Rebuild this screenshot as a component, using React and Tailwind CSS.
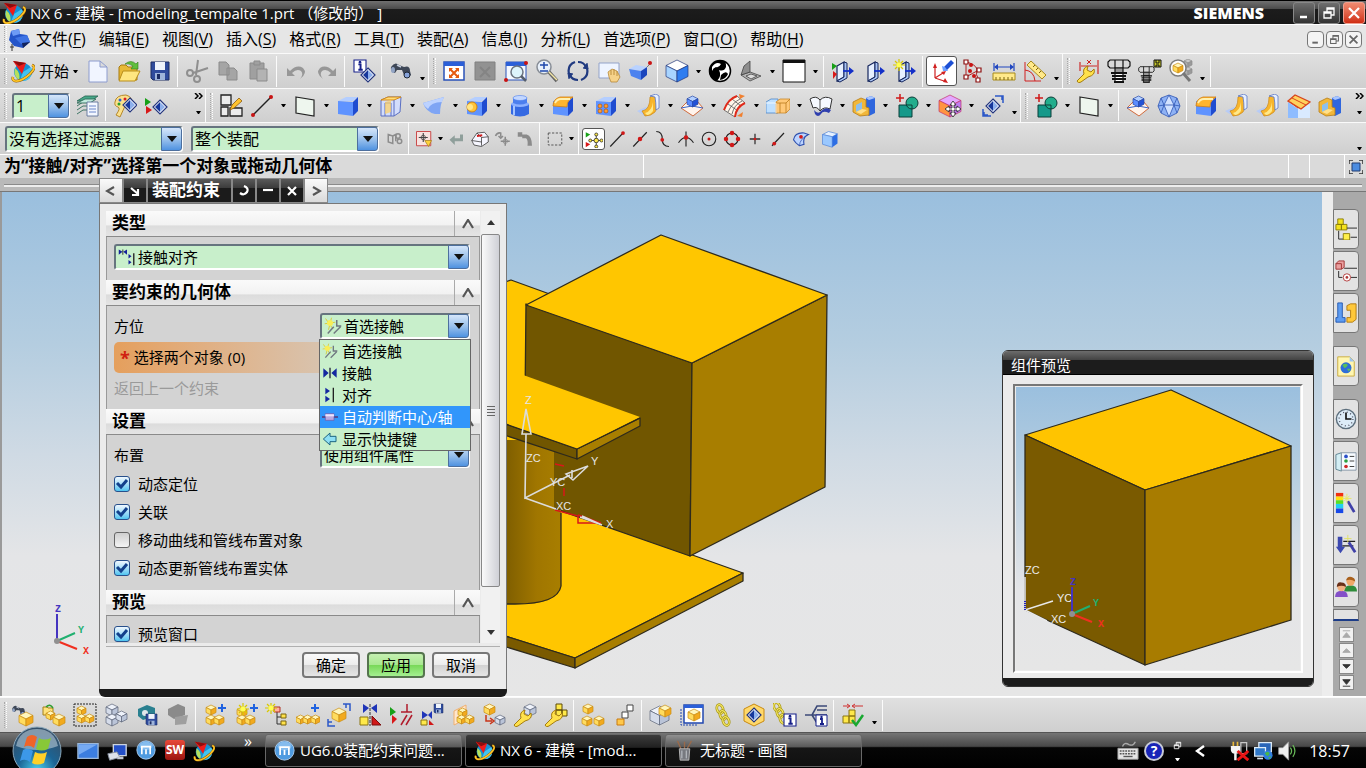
import React, { useState } from 'react'

const uiFont = "font-['Open_Sans','Noto_Sans_CJK_SC',sans-serif]"

const palettes = {
  gold: ['#fff6bc', '#ffdc5e', '#f2aa1e', '#c98c14'],
  blue: ['#b4d0ff', '#5c8dff', '#2352d6', '#2a4aa8'],
  ghost: ['#eef2fa', '#d5dcea', '#bac4d8', '#5c6478'],
  gray: ['#c9c9c9', '#b0b0b0', '#9a9a9a', '#8d8d8d'],
  sky: ['#ffffff', '#a8d4ff', '#2f7df0', '#20337a'],
  pink: ['#e3a8ff', '#ff9440', '#c07cf0', '#c2306c'],
  red: ['#ffd0d0', '#f09a9a', '#d86a6a', '#8d2020'],
}

function Cube({ x = 3, y = 3, s = 18, p = 'gold' }) {
  const c = palettes[p]
  const h = s / 2
  const q = s / 4
  return (
    <g transform={`translate(${x} ${y})`} stroke={c[3]} strokeWidth="0.7" strokeLinejoin="round">
      <path d={`M0 ${q}L${h} 0L${s} ${q}L${h} ${h}Z`} fill={c[0]} />
      <path d={`M0 ${q}L${h} ${h}V${s}L0 ${s - q}Z`} fill={c[1]} />
      <path d={`M${s} ${q}L${h} ${h}V${s}L${s} ${s - q}Z`} fill={c[2]} />
    </g>
  )
}

function Block({ children }) {
  return (
    <g>
      <path d="M2 7L10 3H22L17 7Z" fill="#b4ceff" />
      <path d="M2 7L17 8V22L2 20Z" fill="#5f93ff" />
      <path d="M17 8L22 3V17L17 22Z" fill="#1f4cd0" />
      {children}
    </g>
  )
}

function Plus({ x, y, c = '#1f62e0' }) {
  return <path d={`M${x - 4} ${y}h8M${x} ${y - 4}v8`} stroke={c} strokeWidth="2" />
}

function Star({ x = 6, y = 6 }) {
  return (
    <g transform={`translate(${x} ${y})`}>
      <path d="M0-6V6M-6 0H6M-4-4L4 4M-4 4L4-4" stroke="#d8c800" strokeWidth="1.2" />
      <circle r="2.5" fill="#ffff50" />
    </g>
  )
}

function Diamond({ x = 14, y = 12, s = 7 }) {
  return (
    <g transform={`translate(${x} ${y})`}>
      <path d={`M0 ${-s}L${s} 0L0 ${s}L${-s} 0Z`} fill="#fff" stroke="#23357e" strokeWidth="1.2" />
      <path d={`M0 ${-s + 2}V${s - 2}L${-s + 2} 0Z`} fill="#17389c" />
      <path d={`M0 ${-s + 2}V${s - 2}L${s - 2} 0Z`} fill="#8eb0ec" />
    </g>
  )
}

function Floppy({ x = 3, y = 3, s = 18 }) {
  return (
    <g transform={`translate(${x} ${y}) scale(${s / 18})`}>
      <path d="M0 0H18V18H2L0 16Z" fill="#2f4b9c" stroke="#1c2c63" />
      <path d="M4 0H14V8H4Z" fill="#eef3fb" />
      <path d="M4 11H14V18H4Z" fill="#9eb4da" />
      <path d="M6 12h3v5h-3z" fill="#1c2c63" />
    </g>
  )
}

function Binoculars() {
  return (
    <g>
      <path d="M2 8Q6 2 10 6L15 8Q21 6 21 12L22 16Q18 20 15 16L13 11L8 11L6 14Q1 13 2 8Z" fill="#3e4757" />
      <ellipse cx="4" cy="11" rx="2" ry="3" fill="#93a5c5" />
      <ellipse cx="18" cy="16" rx="3" ry="3" fill="#87a3da" stroke="#1f2836" />
      <path d="M8 6l4 2" stroke="#c8d0de" strokeWidth="1.4" />
    </g>
  )
}

function Camera({ c }) {
  return (
    <g fill={c}>
      <path d="M3 6L12 2L20 5V13L8 17L3 13Z" />
      <circle cx="10" cy="10" r="4" fill="#dfe8ea" stroke={c} strokeWidth="2" />
    </g>
  )
}

function Wrench({ x = 0, y = 0 }) {
  return (
    <g transform={`translate(${x} ${y})`}>
      <path d="M1 21L8 14Q6 8 12 6L11 10L15 12L18 9Q20 15 12 17L5 22Q2 24 1 21Z" fill="#ffe14a" stroke="#a47c10" />
    </g>
  )
}

function Bolt() {
  return (
    <g fill="#d8d8d8" stroke="#111" strokeWidth="1.2">
      <path d="M3 1H21L23 3V7L21 9H3L1 7V3ZM8 1V9M16 1V9" />
      <path d="M8 9H16V14H8Z" fill="#999" />
      <path d="M8 14H16V23H8Z" fill="#fff" />
      <path d="M4 14H20M5 17H19M5 20H19M7 23H17" strokeWidth="1.800" />
    </g>
  )
}

function Chain({ x = 0, y = 0 }) {
  const links = [
    [9, 6],
    [12, 12],
    [15, 18],
  ]
  return (
    <g transform={`translate(${x} ${y})`} fill="none">
      {links.map(([cx, cy]) => (
        <g key={cy} transform={`rotate(-20 ${cx} ${cy})`}>
          <ellipse cx={cx} cy={cy} rx="3" ry="4.5" stroke="#a89610" strokeWidth="2.6" />
          <ellipse cx={cx} cy={cy} rx="3" ry="4.5" stroke="#f4e868" strokeWidth="1.2" />
        </g>
      ))}
    </g>
  )
}

function InfoBox({ x, y, s = 11 }) {
  return (
    <g transform={`translate(${x} ${y}) scale(${s / 11})`}>
      <path d="M0 0H11V11H0Z" fill="#fff" stroke="#17208a" />
      <path d="M4 4H6V9M4 9H8" stroke="#17208a" strokeWidth="1.8" fill="none" />
      <circle cx="5.5" cy="2" r="1.2" fill="#17208a" />
    </g>
  )
}

function Door() {
  return (
    <g>
      <path d="M6 7L13 3V18L6 22Z" fill="#e7f0ff" stroke="#16265c" strokeWidth="1.2" />
      <path d="M13 3L16 4V19L9 23L6 22L13 18Z" fill="#a9c4f4" stroke="#16265c" />
      <path d="M12 12H19" stroke="#1430c8" strokeWidth="1.8" />
      <path d="M18 8L23 12L18 16Z" fill="#1430c8" />
    </g>
  )
}

function Flange() {
  return (
    <g>
      <path d="M0 17L9 13L15 17L8 22Z" fill="#b7cbf6" />
      <path d="M5 17Q13 16 13 3L19 1Q21 14 18 18Q14 22 8 22Z" fill="#f8b52c" stroke="#c98718" strokeWidth="0.7" />
      <path d="M8 19Q15 17 16 8V17Q13 21 10 21Z" fill="#ffe98a" />
      <path d="M13 2L19 0L22 2V14L19 16Q19 8 18 3Z" fill="#e6efff" stroke="#5b76c4" strokeWidth="0.8" />
    </g>
  )
}

const node = (x, y) => <circle cx={x} cy={y} r="2" fill="#c81414" />

const icons = {
  nx: (
    <g>
      <circle cx="12" cy="13" r="9" fill="#1590d4" />
      <path d="M12 13L20 8Q23 14 18 20Q14 23 9 21Z" fill="#43c4f0" />
      <path d="M4 9Q10 14 8 21Q2 17 4 9Z" fill="#b6e05a" />
      <path d="M2 2L15 4L11 15Z" fill="#ec1c1c" />
      <path d="M2 2L15 4L8 7Z" fill="#8e0c0c" />
      <path d="M21 6Q26 8 19 15Q10 23 4 22Q1 21 2 18" fill="none" stroke="#8a5606" strokeWidth="2.6" />
      <path d="M21 6Q26 8 19 15Q10 23 4 22Q1 21 2 18" fill="none" stroke="#ffc626" strokeWidth="1.7" />
    </g>
  ),
  part: (
    <g>
      <path d="M4 4L12 2L13 7L20 8L23 15L16 21L7 19L2 13Z" fill="#2455c9" />
      <path d="M4 4L12 2L13 7L6 9Z" fill="#6d9bf5" />
      <path d="M8 11L20 8L23 15L14 17Z" fill="#3f74e4" />
      <path d="M16 21L15 16L23 15Z" fill="#12245e" />
      <path d="M3 20h4M5 17v7" stroke="#333" />
    </g>
  ),
  new: <path d="M3 2H14L21 8V23H3ZM14 2V8H21" fill="#f1f5ff" stroke="#8d9ccf" />,
  open: (
    <g>
      <path d="M2 8L4 6H9L11 8H20V21H2Z" fill="#e7b936" stroke="#a77a10" />
      <path d="M6 12H23L18 22H2Z" fill="#ffe680" stroke="#b98e1b" />
      <path d="M8 5Q14 0 19 5L21 3V10H14L16 7Q12 4 8 5Z" fill="#5fbf3e" stroke="#2f7d1a" strokeWidth="0.6" />
    </g>
  ),
  save: <Floppy />,
  cut: (
    <g fill="none" stroke="#8f8f8f" strokeWidth="2">
      <path d="M13 1L11 16M23 9L8 14" />
      <circle cx="5" cy="14" r="3" />
      <circle cx="12" cy="20" r="3" />
    </g>
  ),
  copy: <path d="M3 3H10L13 6V16H3ZM11 9H18L21 12V21H11Z" fill="#a5a5a5" stroke="#8b8b8b" />,
  paste: (
    <g fill="#a0a0a0" stroke="#8b8b8b">
      <path d="M3 4H17V20H3Z" />
      <path d="M7 2H13V6H7Z" />
      <path d="M10 10H20V22H10Z" fill="#b3b3b3" />
    </g>
  ),
  undo: <path d="M3 9V17H11L8 14Q13 9 17 12Q20 15 16 20Q24 14 19 9Q13 5 6 12Z" fill="#979797" />,
  redo: <path d="M21 9V17H13L16 14Q11 9 7 12Q4 15 8 20Q0 14 5 9Q11 5 18 12Z" fill="#979797" />,
  info: (
    <g>
      <InfoBox x={2} y={1} s={12} />
      <Diamond x={16} y={16} s={7} />
    </g>
  ),
  find: <Binoculars />,
  fit: (
    <g>
      <path d="M2 3H22V21H2Z" fill="#fff" stroke="#2a52b8" strokeWidth="1.5" />
      <path d="M2 3H22V7H2Z" fill="#2b5fd8" />
      <path d="M8 10L16 18M16 10L8 18" stroke="#e55a10" strokeWidth="2" />
      <path d="M7 9h4l-4 4zM17 9v4l-4-4zM7 19v-4l4 4zM17 19h-4l4-4z" fill="#e55a10" />
    </g>
  ),
  fitOff: (
    <g>
      <path d="M2 3H22V21H2Z" fill="#929292" stroke="#808080" />
      <path d="M7 8L17 18M17 8L7 18" stroke="#848484" strokeWidth="2" />
    </g>
  ),
  zoomBox: (
    <g>
      <path d="M2 3H22V21H2Z" fill="#f4f8ff" stroke="#2a52b8" />
      <path d="M2 3H22V7H2Z" fill="#2b5fd8" />
      <circle cx="13" cy="13" r="6" fill="#def4fb" stroke="#6c7480" strokeWidth="1.5" />
      <path d="M17 17L22 22" stroke="#57606e" strokeWidth="2.5" />
      {node(22, 4)}
      {node(2, 21)}
    </g>
  ),
  zoom: (
    <g>
      <circle cx="9" cy="8" r="7" fill="#e9f1fb" stroke="#878d96" strokeWidth="1.5" />
      <path d="M9 3V10M5 6H13M5 12H13" stroke="#1f48ac" strokeWidth="1.5" />
      <path d="M14 13L22 22" stroke="#666" strokeWidth="3.5" />
      <path d="M14 13L22 21" stroke="#f4e7a8" strokeWidth="1.5" />
    </g>
  ),
  rotate: (
    <g fill="none" stroke="#203a80" strokeWidth="2.2">
      <path d="M3 15Q1 6 9 3M21 9Q23 18 15 21M12 3Q18 3 20 8M12 21Q6 21 4 16" />
      <path d="M17 9L22 10L21 4M7 15L2 14L3 20" fill="#203a80" strokeWidth="1" />
    </g>
  ),
  pan: (
    <g>
      <path d="M2 4H22V19H2Z" fill="#eef4ff" stroke="#93a3c9" />
      <path d="M11 13L15 10L20 12L23 18L20 23H14L12 18Z" fill="#f6d28a" stroke="#b07f2b" strokeWidth="0.7" />
      <path d="M14 11V16M17 10V16M20 12V17" stroke="#b07f2b" strokeWidth="0.8" />
    </g>
  ),
  persp: (
    <g>
      <path d="M1 10L8 6L19 8L13 12Z" fill="#b9d2ff" />
      <path d="M1 10L13 12V21L3 17Z" fill="#4d83ef" />
      <path d="M13 12L19 8V16L13 21Z" fill="#1b46bd" />
      <path d="M19 8L22 5" stroke="#777" />
      {node(22, 4)}
    </g>
  ),
  shaded: <Cube x={1} y={1} s={22} p="sky" />,
  yinyang: (
    <g>
      <circle cx="12" cy="12" r="10.5" fill="#fff" stroke="#000" strokeWidth="1.5" />
      <path d="M13 1Q19 2 18 8Q16 13 11 11Q14 17 9 22Q1 19 1 12Q2 2 13 1Z" fill="#000" />
      <path d="M4 8Q8 2 13 5Q11 9 8 8Q5 9 4 12Z" fill="#fff" />
      <path d="M13 16Q18 11 20 15Q18 20 12 21Z" fill="#000" />
    </g>
  ),
  clip: (
    <g stroke="#444" fill="#b4b4b4" strokeWidth="0.8">
      <path d="M2 16L11 13L22 17L11 22Z" />
      <path d="M2 16L5 7L11 2V13Z" fill="#8e8e8e" />
      <path d="M7 17L12 15L18 17L12 20Z" fill="#dcdcdc" />
    </g>
  ),
  white: (
    <g>
      <path d="M1 1H23V23H1Z" fill="#fff" stroke="#111" />
      <path d="M1 1H23V4H1Z" fill="#111" />
    </g>
  ),
  doorIn: (
    <g>
      <Door />
      <path d="M1 4L6 7L1 11Z" fill="#18a018" />
      <path d="M2 12L6 15L2 20Z" fill="#d81818" />
    </g>
  ),
  door: <Door />,
  doorNew: (
    <g>
      <Door />
      <Star x={6} y={6} />
    </g>
  ),
  csys: (
    <g>
      <path d="M5 19V8M5 19L13 14M5 19L14 22" stroke="#d02020" fill="none" strokeWidth="1.2" />
      <path d="M5 4L7 9H3ZM16 12L14 16L11 13ZM18 24L13 23L15 19Z" fill="#d02020" />
      <path d="M13 9L21 1L24 4L16 12Z" fill="#1c4fd4" />
      <path d="M12 7L13 12L18 12L15 8Z" fill="#6ea0ff" />
    </g>
  ),
  sketchPts: (
    <g>
      <path d="M5 3V18M5 3Q14 5 16 10Q14 16 18 21M5 18Q12 14 18 11" fill="none" stroke="#b02020" />
      <g fill="#fff" stroke="#8c1010" strokeWidth="1.2">
        <path d="M3 1h4v4h-4zM3 16h4v4h-4zM16 9h4v4h-4zM15 19h4v4h-4z" />
      </g>
      {node(10, 6)}
      {node(9, 12)}
      {node(13, 17)}
    </g>
  ),
  ruler: (
    <g>
      <path d="M1 14H23V21H1Z" fill="#ffe98a" stroke="#a88a1a" />
      <path d="M4 18V21M8 18V21M12 18V21M16 18V21M20 18V21" stroke="#7b6410" />
      <path d="M2 4V12M22 4V12M3 8H21" stroke="#2147c0" strokeWidth="1.2" />
      <path d="M2 8L6 5V11ZM22 8L18 5V11Z" fill="#2147c0" />
    </g>
  ),
  angle: (
    <g>
      <path d="M2 3V22H18M2 11Q11 12 12 22" fill="none" stroke="#d02020" />
      <path d="M8 2L23 16L19 20L4 6Z" fill="#ffe98a" stroke="#a88a1a" />
      <path d="M10 8l2-2M13 11l2-2M16 14l2-2" stroke="#7b6410" />
    </g>
  ),
  wrenchDim: (
    <g>
      <path d="M4 3V12M22 1V15M5 7H21" stroke="#cc2a2a" fill="none" strokeWidth="1.2" />
      <path d="M11 1L15 5M15 1L11 5" stroke="#cc2020" />
      <Wrench x={0} y={1} />
    </g>
  ),
  bolt: <Bolt />,
  boltSave: (
    <g>
      <g transform="translate(0 7) scale(0.7)">
        <Bolt />
      </g>
      <path d="M16 1H23V8H16Z" fill="#c7c72a" stroke="#111" />
      <path d="M18 1v3h3v-3M18 8v-2h3v2" fill="none" stroke="#111" />
    </g>
  ),
  findPart: (
    <g>
      <Cube x={15} y={0} s={8} p="gray" />
      <Cube x={15} y={8} s={8} p="gray" />
      <circle cx="9" cy="9" r="8" fill="#fff" stroke="#7d7d7d" strokeWidth="1.5" />
      <Cube x={4} y={4} s={10} />
      <path d="M14 14L21 22" stroke="#777" strokeWidth="3" />
    </g>
  ),
  layers: (
    <g strokeWidth="0.9">
      <path d="M1 7L9 2H22L15 7Z" fill="#46a888" stroke="#2d6a58" />
      <path d="M1 12L7 8H12M1 16L7 12H12M1 20L7 16H12" fill="none" stroke="#2d6a58" />
      <path d="M1 9L9 5H20L14 9Z" fill="#c3ece0" stroke="#2d6a58" />
      <path d="M11 8H22V22H11Z" fill="#f3f7ff" stroke="#61739a" />
      <path d="M13 12H20M13 15H20M13 18H20" stroke="#5b78c4" />
    </g>
  ),
  palette: (
    <g>
      <path d="M2 8Q3 1 13 1Q20 3 19 10Q18 13 12 12L7 23L3 21Q8 14 5 13Q1 12 2 8Z" fill="#fbe08c" stroke="#b5882a" />
      <circle cx="7" cy="6" r="1.5" fill="#2860d8" />
      <circle cx="12" cy="5" r="1.5" fill="#d82020" />
      <circle cx="6" cy="10" r="1.5" fill="#28a028" />
      <Diamond x={17} y={11} s={7} />
    </g>
  ),
  showHide: (
    <g>
      <path d="M1 4L7 8L1 12Z" fill="#17a017" />
      <path d="M2 12L8 16L2 20Z" fill="#d81818" />
      <Diamond x={16} y={13} s={7} />
    </g>
  ),
  sketch: (
    <g fill="none" stroke="#222" strokeWidth="1.3">
      <path d="M2 1H12V11H2ZM2 13H9V22H2ZM11 14H23V22H11Z" fill="#ececec" />
      <path d="M11 16L13 11L20 4L23 7L15 14Z" fill="#ffc32e" stroke="#8a5a10" strokeWidth="0.8" />
    </g>
  ),
  line: (
    <g>
      <path d="M3 21L21 3" stroke="#222" strokeWidth="1.4" />
      {node(3, 21)}
      {node(21, 3)}
    </g>
  ),
  plane: <path d="M3 3L21 6V22L3 19Z" fill="#eef6ee" stroke="#222" strokeWidth="1.2" />,
  block: <Block />,
  extrude: (
    <g>
      <path d="M2 6L9 3H22L21 18L15 22H2Z" fill="#d3ddfb" stroke="#5a6fc2" />
      <path d="M2 6L9 3H22L15 6Z" fill="#ffdd7a" stroke="#d88b14" />
      <path d="M6 9V22M12 9V22M6 9H12M15 6V22" stroke="#5a6fc2" fill="none" />
      <path d="M6 8L12 6V18L6 20Z" fill="#ffd060" opacity="0.7" />
    </g>
  ),
  sheet: (
    <g>
      <path d="M1 9L22 3Q18 10 18 20L13 20Q4 18 1 9Z" fill="#7fa5f4" />
      <path d="M1 9L22 3L20 8Q9 8 6 15Q2 12 1 9Z" fill="#bcd2ff" />
    </g>
  ),
  boss: (
    <Block>
      <circle cx="7" cy="13" r="5" fill="#ffc43a" stroke="#cf8510" />
      <circle cx="5" cy="13" r="3" fill="#ffe68a" />
    </Block>
  ),
  cylinder: (
    <g>
      <path d="M3 10V20Q12 25 21 20V10Z" fill="#3569e2" />
      <ellipse cx="12" cy="10" rx="9" ry="3" fill="#8db1ff" />
      <path d="M5 4V9Q12 12 19 9V4Z" fill="#4c7fee" />
      <ellipse cx="12" cy="4" rx="7" ry="2.5" fill="#c3d7ff" stroke="#4c7fee" strokeWidth="0.6" />
      <path d="M6 12V21" stroke="#a5c4ff" strokeWidth="2" />
    </g>
  ),
  blend: (
    <Block>
      <path d="M2 12Q2 5 9 3H22Q16 6 16 13Z" fill="#ffb52e" stroke="#d07e12" strokeWidth="0.8" />
      <path d="M4 9Q6 5 10 5H19" stroke="#fff0b0" fill="none" strokeWidth="1.8" />
    </Block>
  ),
  pattern: (
    <Block>
      <g fill="#ff9b2e" stroke="#a84f08" strokeWidth="0.6">
        <circle cx="6" cy="12" r="2" />
        <circle cx="12" cy="12" r="2" />
        <circle cx="6" cy="17" r="2" />
        <circle cx="12" cy="17" r="2" />
      </g>
    </Block>
  ),
  flange: <Flange />,
  cubeNet: (
    <g>
      <path d="M8 7L1 14L13 22L23 14L17 7" fill="#fff4ec" stroke="#d06a3c" />
      <path d="M1 14L12 12L23 14" fill="none" stroke="#3b66c8" />
      <Cube x={7} y={2} s={11} p="blue" />
    </g>
  ),
  mesh: (
    <g stroke="#555" fill="#fff6ea" strokeWidth="0.8">
      <path d="M1 16Q5 5 14 2L22 9Q13 13 12 23Z" />
      <path d="M5 18Q9 9 17 5M9 20Q11 11 19 7M5 10L15 17M9 5L18 12" fill="none" />
      <path d="M1 16Q5 5 14 2M12 23Q13 13 22 9" fill="none" stroke="#e02a1a" strokeWidth="2" />
      <path d="M16 0l6 2-5 3zM14 22l6-4-1 5z" fill="#f08030" stroke="none" />
    </g>
  ),
  trim: (
    <g strokeWidth="0.8">
      <path d="M0 8L5 5H12V19H0Z" fill="#bfe0ff" stroke="#4b86c8" />
      <path d="M10 8L14 5H24V15L20 19H10Z" fill="#ffc878" stroke="#c9882a" />
      <path d="M10 9H20V19M20 9L24 5M14 9V19" stroke="#b97a1c" fill="none" />
      <path d="M0 9H10V19" fill="none" stroke="#fff" />
    </g>
  ),
  bookSheet: (
    <g>
      <path d="M1 5Q7 1 11 6Q16 1 23 5L21 15Q15 12 11 17Q8 12 4 14Z" fill="#f6f9ff" stroke="#333" />
      <path d="M5 16Q9 21 12 17Q17 12 22 16L20 19Q14 16 12 20Q9 24 6 20Z" fill="#2f3fae" />
      <path d="M11 6V16" stroke="#555" />
    </g>
  ),
  pocket: (
    <g>
      <path d="M14 4L19 2L23 4V19L17 22L14 20Z" fill="#2f66dd" />
      <path d="M14 4L19 2L23 4L17 6Z" fill="#a9c6ff" />
      <path d="M1 8L9 4L14 6V13L17 14V21L8 22L1 18Z" fill="#f1b73a" stroke="#b67c14" strokeWidth="0.8" />
      <path d="M4 11L10 8V15L4 18Z" fill="#8dc0ee" />
      <path d="M10 15L15 16L9 20L4 18Z" fill="#ffe08a" />
    </g>
  ),
  unite: (
    <g>
      <path d="M4 11H17V23H4Z" fill="#15998a" stroke="#0b3e38" />
      <circle cx="17" cy="9" r="6" fill="#22ad8c" stroke="#0b3e38" />
      <path d="M11 11H17V15" fill="none" stroke="#0b3e38" />
      <path d="M1 4H9M5 0V8" stroke="#d01818" strokeWidth="1.5" />
    </g>
  ),
  moveFace: (
    <g>
      <Cube x={1} y={1} s={22} p="pink" />
      <path d="M15 7L18 11H16V14H19V12L23 15L19 18V16H16V19H18L15 23L12 19H14V16H11V18L7 15L11 12V14H14V11H12Z" fill="#fff" stroke="#222" strokeWidth="0.8" />
    </g>
  ),
  replace: (
    <g>
      <Diamond x={12} y={12} s={7} />
      <path d="M14 2H22V9M18 2H21V6M2 15V22H10M3 18V21H7" fill="none" stroke="#2c58c8" strokeWidth="1.5" />
    </g>
  ),
  gem: (
    <g stroke="#2f56b4" strokeWidth="0.8">
      <path d="M12 1L20 4L23 12L20 19L12 23L4 19L1 12L4 4Z" fill="#8fb2f4" />
      <path d="M12 1L17 11L12 23L7 11Z" fill="#d3e2ff" />
      <path d="M1 12L7 11H17L23 12M4 4L7 11L4 19M20 4L17 11L20 19" fill="none" />
    </g>
  ),
  roof: (
    <g>
      <path d="M1 8L11 15V24H1Z" fill="#8ebcff" />
      <path d="M11 15L23 10V24H11Z" fill="#d9eaff" />
      <path d="M1 7L8 1L23 8L14 15Z" fill="#ffd25e" stroke="#d8441c" strokeWidth="1.3" />
      <path d="M5 4L19 11M3 8L11 14" stroke="#d8441c" />
    </g>
  ),
  // selection bar
  chainOff: (
    <g fill="none" stroke="#8d8d8d" strokeWidth="2">
      <path d="M3 6L9 8V18L3 16ZM9 8L13 6V15" />
      <circle cx="16" cy="8" r="3" />
      <circle cx="18" cy="15" r="3" />
    </g>
  ),
  snapBox: (
    <g>
      <path d="M2 2H21V21H2Z" fill="#f7e3e0" stroke="#c84848" strokeWidth="1.3" />
      <path d="M5 10H17M11 4V16" stroke="#444" strokeWidth="1.5" />
      <circle cx="11" cy="10" r="3" fill="none" stroke="#444" />
      <path d="M13 14h9l-4 8z" fill="#ffd23a" stroke="#a8801a" />
    </g>
  ),
  back: <path d="M20 6V15H9V20L2 13L9 7V11H16V6Z" fill="#8f9f9b" />,
  wire: (
    <g fill="#f6f6ff" stroke="#333">
      <path d="M1 14L8 4L18 3L23 9V16L14 22L4 20Z" />
      <path d="M8 4L14 10L23 9M14 10V21M1 14L14 16" fill="none" />
      <path d="M8 8L15 7" stroke="#d02020" strokeWidth="2.5" />
    </g>
  ),
  moveOff: (
    <g fill="none" stroke="#8b8b8b" strokeWidth="2">
      <path d="M2 8Q4 3 9 4V9M6 8L9 11L12 8M15 9V21M9 15H21" />
      <circle cx="15" cy="15" r="3" strokeWidth="1" />
    </g>
  ),
  pathOff: <path d="M1 3H7V6H13Q20 8 20 21H14Q15 13 12 11H7V9H1Z" fill="#8b8b8b" />,
  marquee: <path d="M3 4H21V20H3Z" fill="none" stroke="#555" strokeWidth="1.3" strokeDasharray="3 2" />,
  snapAll: (
    <g>
      <path d="M1 3L7 6L1 10Z" fill="#18a018" />
      <path d="M1 16L7 19L1 23Z" fill="#d81818" />
      <path d="M15 6V22M7 14H23" stroke="#222" />
      <g fill="#ffe94a" stroke="#222">
        <circle cx="15" cy="14" r="3" />
        <circle cx="15" cy="6" r="2" />
        <circle cx="15" cy="22" r="2" />
        <circle cx="7" cy="14" r="2" />
        <circle cx="22" cy="14" r="2" />
      </g>
    </g>
  ),
  end: (
    <g>
      <path d="M3 22L21 3" stroke="#222" strokeWidth="1.5" />
      <circle cx="20" cy="4" r="2.5" fill="#d01818" />
    </g>
  ),
  mid: (
    <g>
      <path d="M3 22L21 3" stroke="#222" strokeWidth="1.5" />
      <circle cx="12" cy="12" r="3" fill="#d01818" />
    </g>
  ),
  ctrl: (
    <g>
      <path d="M3 2Q11 2 11 12Q11 22 20 22" fill="none" stroke="#222" strokeWidth="1.5" />
      <circle cx="11" cy="13" r="2.5" fill="#d01818" />
    </g>
  ),
  cross: (
    <g>
      <path d="M12 2V22M2 17Q12 3 22 17" fill="none" stroke="#222" strokeWidth="1.5" />
      <circle cx="12" cy="10" r="3" fill="#d01818" />
    </g>
  ),
  center: (
    <g>
      <circle cx="12" cy="12" r="9" fill="none" stroke="#222" strokeWidth="1.5" />
      {node(12, 12)}
    </g>
  ),
  quad: (
    <g>
      <circle cx="12" cy="12" r="8" fill="none" stroke="#222" strokeWidth="1.5" />
      <g fill="#d01818">
        <circle cx="12" cy="4" r="3" />
        <circle cx="12" cy="20" r="3" />
        <circle cx="4" cy="12" r="3" />
        <circle cx="20" cy="12" r="3" />
      </g>
    </g>
  ),
  point: (
    <g>
      <path d="M12 5V19M5 12H19" stroke="#333" strokeWidth="1.7" />
      <circle cx="12" cy="12" r="1.8" fill="#d01818" />
    </g>
  ),
  onCurve: (
    <g>
      <path d="M4 21L20 4" stroke="#222" strokeWidth="1.5" />
      <circle cx="7" cy="18" r="2.5" fill="#d01818" />
    </g>
  ),
  onFace: (
    <g>
      <path d="M2 13Q4 3 16 4L22 6Q14 9 16 19L10 21Q5 18 2 13Z" fill="#bcd4ff" stroke="#2d4fae" strokeWidth="1.5" />
      <path d="M10 21Q10 12 22 6" fill="none" stroke="#2d4fae" />
      <circle cx="12" cy="9" r="2.5" fill="#d01818" />
    </g>
  ),
  smallCube: (
    <g>
      <path d="M2 6L10 2L22 5L15 9Z" fill="#e4f0ff" stroke="#5a8ad8" />
      <path d="M2 6L15 9V23L2 19Z" fill="#9ac8ff" stroke="#5a8ad8" />
      <path d="M15 9L22 5V18L15 23Z" fill="#2c6ee4" />
    </g>
  ),
  // assembly bar
  findComp: (
    <g>
      <g transform="scale(0.65)">
        <Binoculars />
      </g>
      <Cube x={8} y={9} s={14} />
    </g>
  ),
  openComp: (
    <g>
      <path d="M1 4H5L6 5H11V12H1Z" fill="#ffe27a" stroke="#a58018" />
      <path d="M4 4Q8 0 11 5" fill="none" stroke="#2f9e2f" strokeWidth="1.5" />
      <Cube x={4} y={8} s={9} />
      <Cube x={11} y={11} s={12} />
    </g>
  ),
  compBox: (
    <g>
      <path d="M1 1H23V23H1Z" fill="none" stroke="#222" strokeDasharray="2 1" />
      <Cube x={4} y={3} s={9} />
      <Cube x={4} y={11} s={9} />
      <Cube x={12} y={11} s={9} />
    </g>
  ),
  compGhost: (
    <g>
      <Cube x={2} y={1} s={12} p="ghost" />
      <Cube x={2} y={11} s={12} p="ghost" />
      <Cube x={12} y={8} s={11} p="ghost" />
    </g>
  ),
  camSave: (
    <g>
      <Camera c="#2a8090" />
      <Floppy x={11} y={11} s={11} />
    </g>
  ),
  camOff: (
    <g>
      <path d="M2 6L12 1L19 4V12L8 16L2 12Z" fill="#8b8b8b" />
      <path d="M9 14L22 12L20 21L9 22Z" fill="#9f9f9f" />
    </g>
  ),
  addComp: (
    <g>
      <Cube x={3} y={2} s={10} />
      <Cube x={3} y={12} s={10} />
      <Cube x={11} y={12} s={10} />
      <Plus x={19} y={5} />
    </g>
  ),
  newComp: (
    <g>
      <Cube x={3} y={4} s={10} />
      <Cube x={3} y={12} s={10} />
      <Cube x={11} y={12} s={10} />
      <Star x={9} y={6} />
      <Plus x={20} y={5} />
    </g>
  ),
  newParent: (
    <g>
      <path d="M12 9V21H18M12 14H18" fill="none" stroke="#333" />
      <path d="M9 4h6v5h-6z" fill="#ffb0a0" stroke="#b03020" />
      <path d="M16 11h5v4h-5zM16 18h5v4h-5z" fill="#ffe24a" stroke="#7b6410" />
      <Star x={6} y={5} />
    </g>
  ),
  arrayComp: (
    <g>
      <Cube x={0} y={12} s={9} />
      <Cube x={7} y={12} s={9} />
      <Cube x={15} y={12} s={9} />
      <Plus x={19} y={5} />
    </g>
  ),
  moveComp: (
    <g>
      <Cube x={5} y={5} s={14} />
      <path d="M16 1H23V8M19 1V5M1 16V23H8M1 19H5" fill="none" stroke="#2c58c8" strokeWidth="1.5" />
    </g>
  ),
  mirror: (
    <g>
      <path d="M12 1V23" stroke="#333" strokeDasharray="3 1" />
      <path d="M5 1L11 5L5 10ZM19 1L13 5L19 10Z" fill="#1f35b8" />
      <path d="M2 14H10V22H2Z" fill="#ffe94a" stroke="#8a7410" />
      <path d="M14 13L23 22H14Z" fill="#d01818" stroke="#7a0c0c" />
    </g>
  ),
  constraint: (
    <g>
      <path d="M1 4L7 9L1 13Z" fill="#18a018" />
      <path d="M3 12L8 16L3 21Z" fill="#d81818" />
      <path d="M18 1V9M12 9H23M12 22L18 12M17 22L23 12" stroke="#b01c2c" strokeWidth="1.5" />
    </g>
  ),
  constraintSave: (
    <g>
      <path d="M2 8L8 12L2 16ZM12 8L8 12L12 16Z" fill="#1f35b8" />
      <path d="M1 17h6v5h-6z" fill="#ffe94a" stroke="#8a7410" />
      <path d="M9 17L14 22H9Z" fill="#d01818" />
      <Floppy x={14} y={1} s={9} />
    </g>
  ),
  compFade: (
    <g>
      <path d="M3 8L15 2V16L3 22Z" fill="#ffe6cc" stroke="#f0b070" />
      <Cube x={7} y={5} s={9} />
      <Cube x={6} y={12} s={9} />
      <Cube x={14} y={12} s={9} />
    </g>
  ),
  compSwap: (
    <g>
      <Cube x={2} y={1} s={11} />
      <Cube x={13} y={12} s={10} p="ghost" />
      <path d="M4 12V18H10M8 15L12 18L8 21" fill="none" stroke="#c83418" strokeWidth="1.5" />
    </g>
  ),
  compTool: (
    <g>
      <Cube x={11} y={1} s={12} p="ghost" />
      <Wrench x={0} y={1} />
    </g>
  ),
  compTool2: (
    <g>
      <path d="M12 1h6v6h-6zM12 7h6v6h-6zM18 7h5v6h-5z" fill="#ffe94a" stroke="#5c4a08" />
      <Wrench x={0} y={1} />
    </g>
  ),
  explode: (
    <g>
      <Cube x={2} y={1} s={10} />
      <Cube x={1} y={13} s={10} />
      <Cube x={13} y={13} s={10} />
    </g>
  ),
  steps: (
    <g stroke="#444">
      <path d="M15 2h6v6h-6zM10 9h6v6h-6z" fill="#fff" />
      <path d="M5 16h7v6h-7z" fill="#ffc84a" stroke="#c87a10" />
    </g>
  ),
  compWire: (
    <g>
      <Cube x={1} y={3} s={19} p="ghost" />
      <Cube x={10} y={2} s={12} />
    </g>
  ),
  compWin: (
    <g>
      <path d="M4 2H23V20H4Z" fill="#fff" stroke="#2147b0" strokeWidth="1.5" />
      <path d="M4 2H23V5H4Z" fill="#2b5fd8" />
      <Cube x={8} y={6} s={12} />
      <path d="M1 6V22H18" fill="none" stroke="#2147b0" strokeDasharray="2 1" />
    </g>
  ),
  chain: <Chain />,
  hexDiamond: (
    <g>
      <path d="M2 6L12 1L22 6V18L12 23L2 18Z" fill="#ffd86a" stroke="#c88a10" />
      <Diamond x={12} y={12} s={7} />
    </g>
  ),
  chainInfo: (
    <g>
      <Chain x={-5} y={-2} />
      <InfoBox x={11} y={11} s={12} />
    </g>
  ),
  treeInfo: (
    <g>
      <path d="M1 12H8L13 3H23M8 12H23M8 12L13 20M13 7H23" fill="none" stroke="#3c4a78" strokeWidth="1.6" />
      <InfoBox x={12} y={12} s={11} />
    </g>
  ),
  check: (
    <g>
      <path d="M2 3h6M6 1l3 2-3 2M22 3H12M14 1l-3 2 3 2" stroke="#d03030" fill="none" />
      <path d="M8 7h6v6h-6zM2 13h6v7h-6zM8 13h6v7h-6z" fill="#ffe94a" stroke="#8a7410" />
      <path d="M11 17L15 22L22 12" fill="none" stroke="#18a830" strokeWidth="2.5" />
    </g>
  ),
  // resource tabs
  navAsm: (
    <g>
      <path d="M3 1h6v6h-6zM1 7h6v6h-6zM7 7h6v6h-6z" fill="#f4e21c" stroke="#8a7c08" />
      <path d="M13 11H24M4 14V23H10M17 21H24" stroke="#222" fill="none" />
      <path d="M9 17h7v7h-7z" fill="#fff04a" stroke="#8a7c08" />
    </g>
  ),
  navCon: (
    <g>
      <path d="M1 4L4 1H10V8L7 10H1Z" fill="#eaa0a0" stroke="#a03030" />
      <path d="M1 4H7V10" fill="none" stroke="#a03030" />
      <path d="M10 9H24M4 12V19H8M17 19H24" stroke="#222" fill="none" />
      <circle cx="13" cy="19" r="4" fill="#fff" stroke="#b03838" />
      <circle cx="13" cy="19" r="1.5" fill="#b03838" />
    </g>
  ),
  navPart: (
    <g>
      <path d="M3 1H8V17H11V22H1V17H3Z" fill="#5d9cf2" stroke="#2458b0" />
      <path d="M13 4L17 2H23V19L19 22H13V17H17V9H13Z" fill="#ffc83a" stroke="#b07a10" />
    </g>
  ),
  navWeb: (
    <g>
      <path d="M3 2H16L21 7V23H3Z" fill="#fff6b0" stroke="#c8a83a" />
      <path d="M16 2V7H21Z" fill="#9cc4f0" />
      <circle cx="12" cy="14" r="6" fill="#2e6ed8" />
      <path d="M8 11Q12 8 14 11Q12 15 10 14ZM13 15l4 0-2 3z" fill="#58c058" />
    </g>
  ),
  clock: (
    <g>
      <circle cx="12" cy="12" r="10.5" fill="#dcecf8" stroke="#5c6e7c" strokeWidth="1.5" />
      <circle cx="12" cy="12" r="7.5" fill="none" stroke="#445" strokeWidth="1.5" strokeDasharray="1 3" />
      <path d="M12 5V12H18" fill="none" stroke="#111" strokeWidth="1.8" />
    </g>
  ),
  roles: (
    <g>
      <path d="M1 5L7 3V23L1 21Z" fill="#d3eef4" stroke="#5c8290" />
      <path d="M7 3H23V22H7Z" fill="#f7fbff" stroke="#8494a4" />
      <circle cx="12" cy="7" r="2" fill="#2b50c8" />
      <circle cx="12" cy="12" r="2" fill="#2ba040" />
      <circle cx="12" cy="18" r="2" fill="#d02828" />
      <path d="M16 7H21M16 12H21M16 18H21" stroke="#333" />
    </g>
  ),
  spectrum: (
    <g>
      <path d="M1 1H9V5H1Z" fill="#f03010" />
      <path d="M1 5H9V9H1Z" fill="#ffe010" />
      <path d="M1 9H9V13H1Z" fill="#58e020" />
      <path d="M1 13H9V18H1Z" fill="#20d0f0" />
      <path d="M1 18H9V23H1Z" fill="#1848e8" />
      <path d="M14 10L21 22" stroke="#4040a8" strokeWidth="3" />
      <path d="M13 2V12M8 7H18M10 4L16 10M16 4L10 10" stroke="#e8e860" />
    </g>
  ),
  process: (
    <g>
      <path d="M3 3H8V14H11L6 21L1 14H3Z" fill="#3c48b0" />
      <path d="M9 8H22M8 13H20" stroke="#222" strokeWidth="1.5" />
      <path d="M15 9L22 20" stroke="#4040a8" strokeWidth="3" />
      <path d="M14 1V9M10 5H18" stroke="#e0e060" />
    </g>
  ),
  people: (
    <g>
      <path d="M10 17Q10 10 17 10Q24 10 24 17Z" fill="#2f8c3a" />
      <circle cx="17" cy="6" r="4.5" fill="#f0a868" />
      <path d="M12 5Q13 0 18 1Q22 2 22 6Q17 3 12 5Z" fill="#a8601c" />
      <path d="M0 23Q0 16 7 16Q14 16 14 23Z" fill="#8450c8" />
      <circle cx="7" cy="12" r="4.5" fill="#f0b080" />
      <path d="M2 12Q2 6 7 7Q12 7 12 12Q7 9 2 12Z" fill="#6a3018" />
    </g>
  ),
  // dialog glyphs
  touchAlign: (
    <g fill="#14229a">
      <path d="M1 2L6 5L1 9ZM12 2L7 5L12 9Z" />
      <path d="M6 2h1v7h-1z" fill="#000" />
      <path d="M14 8L18 11L14 14ZM14 16L18 19L14 22Z" />
      <path d="M20 7h2v16h-2z" fill="#333" />
    </g>
  ),
  prefer: (
    <g>
      <path d="M2 2L12 16M10 1L6 17M1 9L15 7" stroke="#d8c830" strokeWidth="1.2" />
      <circle cx="8" cy="8" r="4" fill="#f8ee58" />
      <path d="M5 22L13 13M13 22L22 13M17 4V12H23" stroke="#707880" strokeWidth="2" fill="none" />
    </g>
  ),
  touch: (
    <g fill="#1428a0">
      <path d="M2 5L10 12L2 19ZM22 5L14 12L22 19Z" />
      <path d="M11 4h2v16h-2z" fill="#223" />
    </g>
  ),
  align: (
    <g fill="#1428a0">
      <path d="M5 1L12 6L5 11ZM5 13L12 18L5 23Z" />
      <path d="M16 1h2v22h-2z" fill="#222" />
    </g>
  ),
  axis: (
    <g>
      <path d="M0 12H24" stroke="#5a2a68" strokeWidth="2" />
      <path d="M5 7H18V17H5Z" fill="#b8a8e0" stroke="#6a58a8" />
      <path d="M5 8H18V11H5Z" fill="#ece4ff" />
    </g>
  ),
  shortcut: <path d="M2 12L12 3V8H21V16H12V21Z" fill="#8ee0f4" stroke="#1c6480" strokeWidth="1.5" />,
  // task bar
  desktop: (
    <g>
      <path d="M1 4H23V20H1Z" fill="#3c7ee0" stroke="#9cb8d8" strokeWidth="1.5" />
      <path d="M2 5H22L2 16Z" fill="#76aaf2" />
    </g>
  ),
  switcher: (
    <g>
      <path d="M8 5H22V17H8Z" fill="#2450c8" stroke="#ccd4e0" strokeWidth="1.5" />
      <path d="M2 15L12 13L15 19L4 22Z" fill="#dde2ea" stroke="#8890a0" />
      <path d="M13 18H19V21H12Z" fill="#c5cad4" />
    </g>
  ),
  maxthon: (
    <g>
      <circle cx="12" cy="12" r="11" fill="#4f9be0" stroke="#b4d4f4" />
      <ellipse cx="12" cy="7" rx="8" ry="5" fill="#9ccaf4" opacity="0.7" />
      <path d="M7 17V8H17V17M12 11V17" fill="none" stroke="#fff" strokeWidth="2" />
    </g>
  ),
  paint: (
    <g>
      <path d="M8 10L4 1M12 10V2M15 10L20 1" stroke="#9a6a4a" strokeWidth="1.5" />
      <path d="M6 10H18L17 23H7Z" fill="#77797f" stroke="#c0c0c0" />
      <path d="M9 12V21M14 12V21" stroke="#cfd3da" />
    </g>
  ),
  keyboard: (
    <g>
      <path d="M6 7Q8 2 13 5Q18 7 20 2" fill="none" stroke="#aaa" strokeWidth="1.5" />
      <path d="M1 9H23V21H1Z" fill="#e4e4e4" stroke="#9a9a9a" />
      <path d="M3 12H21M3 15H21" stroke="#555" strokeWidth="1.5" strokeDasharray="2 1" />
      <path d="M7 18H17" stroke="#555" strokeWidth="1.5" />
    </g>
  ),
  power: (
    <g>
      <path d="M4 1V6M9 1V6" stroke="#e8b83a" strokeWidth="2" />
      <path d="M1 6H12V11Q11 15 8 15V23H5V15Q2 15 1 11Z" fill="#f4f4f4" />
      <path d="M13 2H20V15H13Z" fill="none" stroke="#c8c8c8" strokeWidth="1.5" />
      <path d="M9 12L22 23M22 12L9 23" stroke="#e81414" strokeWidth="3.5" />
    </g>
  ),
  network: (
    <g>
      <path d="M7 2H22V13H7Z" fill="#2a66b8" stroke="#e0eef8" strokeWidth="1.5" />
      <path d="M2 8H15V18H2Z" fill="#2f78c8" stroke="#e0eef8" strokeWidth="1.5" />
      <path d="M5 21H12" stroke="#d8e4f0" strokeWidth="2" />
      <circle cx="18" cy="17" r="5.5" fill="#2f7ee0" />
      <path d="M14 15q4-4 6 0q-2 4-3 3zM18 20l4-2-2 4z" fill="#48b848" />
    </g>
  ),
  speaker: (
    <g>
      <path d="M2 8H7L14 1V23L7 16H2Z" fill="#f0f0f0" stroke="#999" />
      <path d="M16 8Q19 12 16 16M19 5Q24 12 19 19" fill="none" stroke="#68b858" strokeWidth="1.5" />
    </g>
  ),
}

function Icon({ name, className = 'size-6' }) {
  if (name === 'sw') {
    return (
      <span className={`flex items-center justify-center rounded-[3px] bg-gradient-to-b from-[#e84838] to-[#9c1410] text-xs font-bold text-white ${className}`}>
        SW
      </span>
    )
  }
  return (
    <svg viewBox="0 0 24 24" className={`shrink-0 ${className}`} aria-hidden="true">
      {icons[name]}
    </svg>
  )
}

function Down({ className = '' }) {
  return (
    <svg viewBox="0 0 5 3" className={`h-[3px] w-[5px] shrink-0 ${className}`} aria-hidden="true">
      <path d="M0 0H5L3 3H2Z" fill="currentColor" />
    </svg>
  )
}

function Grip({ className = 'mx-1' }) {
  return <span className={`h-[26px] w-[3px] shrink-0 border-x border-dotted border-l-[#a8a8a8] border-r-white ${className}`} />
}

function Sep() {
  return <span className="ml-[2px] mr-[3px] h-[31px] w-px shrink-0 bg-[#fbfbfb]" />
}

/* "|" separator, "v" drop-down arrow, ">" overflow arrow, ":" grip of the next bar */
function Tools({ items, small, active }) {
  return items.map((item, i) => {
    if (item === '|') return <Sep key={i} />
    if (item === ':') {
      return (
        <span key={i} className="flex h-full shrink-0 items-center border-l border-l-[#fafafa]">
          <Grip className="ml-1 mr-[2px]" />
        </span>
      )
    }
    if (item === 'v') {
      return (
        <button key={i} type="button" aria-label="更多" className={`flex h-6 shrink-0 items-center justify-center ${small ? 'w-[10px]' : 'w-3'}`}>
          <Down />
        </button>
      )
    }
    if (item === '>') {
      return (
        <button key={i} type="button" aria-label="工具条选项" className="flex h-5 w-3 shrink-0 items-end justify-center self-end pb-2">
          <Down />
        </button>
      )
    }
    const on = item === active ? 'rounded-[3px] border border-[#555] bg-white' : ''
    return (
      <button
        key={i}
        type="button"
        aria-label={item}
        className={`flex shrink-0 items-center justify-center ${small ? 'h-[22px] w-[23px]' : 'h-[30px] w-[31px]'} ${on}`}
      >
        <Icon name={item} className={small ? 'size-[18px]' : 'size-6'} />
      </button>
    )
  })
}

function Picker({ label, options, icon, className = '', text = 'text-[15px]' }) {
  return (
    <span className={`relative block h-[26px] ${className}`}>
      <select
        aria-label={label}
        className={`size-full appearance-none rounded-[3px] border-2 border-[#66747f] border-b-white border-r-white bg-[#c8efcb] pr-6 leading-5 text-black ${icon ? 'pl-[22px]' : 'pl-[2px]'} ${text}`}
      >
        {options.map((o) => (
          <option key={o}>{o}</option>
        ))}
      </select>
      {icon && <Icon name={icon} className="pointer-events-none absolute left-1 top-1 size-[18px]" />}
      <span className="pointer-events-none absolute bottom-px right-px top-px flex w-[21px] items-center justify-center rounded-r-[3px] border border-[#4d6f9e] bg-gradient-to-b from-[#d5e6fa] via-[#9cc2ec] to-[#4e92e0]">
        <svg viewBox="0 0 10 6" className="h-[6px] w-[10px]">
          <path d="M0 0H10L5 6Z" fill="#111" />
        </svg>
      </span>
    </span>
  )
}

const menus = [
  ['文件', 'F'],
  ['编辑', 'E'],
  ['视图', 'V'],
  ['插入', 'S'],
  ['格式', 'R'],
  ['工具', 'T'],
  ['装配', 'A'],
  ['信息', 'I'],
  ['分析', 'L'],
  ['首选项', 'P'],
  ['窗口', 'O'],
  ['帮助', 'H'],
]

const standardBar = ['new', 'open', 'save', '|', 'cut', 'copy', 'paste', '|', 'undo', 'redo', '|', 'info', '|', 'find', '>', ':', 'fit', 'fitOff', 'zoomBox', 'zoom', 'rotate', 'pan', 'persp', '|', 'shaded', 'v', 'yinyang', 'clip', 'v', 'white', 'v', '|', 'doorIn', 'door', 'doorNew', '|', 'csys', 'sketchPts', 'ruler', 'angle', '>', ':', 'wrenchDim', 'bolt', 'boltSave', 'findPart', '>', '|']
const featureBar = ['sketch', 'line', 'v', 'plane', 'v', 'block', 'v', 'extrude', 'v', 'sheet', 'v', 'boss', 'v', 'cylinder', 'v', 'blend', 'v', 'pattern', 'v', 'flange', 'v', 'cubeNet', 'v', 'mesh', 'v', 'trim', 'v', 'bookSheet', 'v', 'pocket', 'v', 'unite', 'v', 'moveFace', 'v', 'replace', '>', ':', 'unite', 'v', 'plane', 'v', '|', 'cubeNet', 'gem', '|', 'blend', 'flange', 'flange', 'roof', 'pocket']
const snapBar = ['chainOff', '|', 'snapBox', 'v', 'back', 'wire', 'moveOff', 'pathOff', '|', 'marquee', 'v', '|', 'snapAll', 'end', 'mid', 'ctrl', 'cross', 'center', 'quad', 'point', 'onCurve', 'onFace', '|', 'smallCube']
const assemblyBar = ['findComp', 'openComp', 'compBox', 'compGhost', 'camSave', 'camOff', '|', 'addComp', 'newComp', 'newParent', 'arrayComp', 'moveComp', 'mirror', 'constraint', 'constraintSave', 'compFade', 'compSwap', 'compTool', 'compTool2', '|', 'explode', 'steps', '|', 'compWire', 'compWin', 'chain', 'hexDiamond', 'chainInfo', 'treeInfo', '|', 'check', '>', '|']

function WindowGlyph({ kind, className = 'size-[14px]' }) {
  return (
    <svg viewBox="0 0 14 14" className={className} fill="none" stroke="currentColor" aria-hidden="true">
      {kind === 'min' && <path d="M3 11H10" strokeWidth="2.5" />}
      {kind === 'restore' && <path d="M2 6H9V12H2ZM2 7H9M5 6V2H12V9H9M5 3H12" strokeWidth="1.3" />}
      {kind === 'close' && <path d="M2 2L12 12M12 2L2 12" strokeWidth="2.2" />}
    </svg>
  )
}

function TitleBar() {
  return (
    <header className="flex h-6 items-center border-t border-black bg-[linear-gradient(#707070,#4a4a4a_35%,#1c1c1c_36%,#181818)] pl-[2px] pr-px text-white">
      <Icon name="nx" />
      <h1 className="ml-1 whitespace-pre text-[15px] leading-6">NX 6 - 建模 - [modeling_tempalte 1.prt （修改的） ]</h1>
      <span className="ml-auto mr-[29px] text-base font-extrabold">SIEMENS</span>
      <div className="flex gap-[3px]">
        {['min', 'restore'].map((k) => (
          <button key={k} type="button" aria-label={k} className="flex h-[22px] w-[22px] items-center justify-center rounded-[3px] border border-[#888] bg-gradient-to-b from-[#6e6e6e] to-[#333]">
            <WindowGlyph kind={k} />
          </button>
        ))}
        <button type="button" aria-label="关闭" className="flex h-[22px] w-[22px] items-center justify-center rounded-[3px] border border-[#f0a090] bg-gradient-to-b from-[#f08a70] to-[#d02c10]">
          <WindowGlyph kind="close" />
        </button>
      </div>
    </header>
  )
}

function MenuBar() {
  return (
    <nav className="flex h-[29px] items-center border-t border-t-white bg-[#e6e6e6] pr-1 text-base">
      <Grip />
      <Icon name="part" className="-ml-1 size-6" />
      <div className="ml-[5px] flex gap-[13px]">
        {menus.map(([name, key]) => (
          <button key={key} type="button" className="whitespace-nowrap">
            {name}(<u className="underline-offset-2">{key}</u>)
          </button>
        ))}
      </div>
      <div className="ml-auto flex gap-[2px] text-[#666]">
        {['min', 'restore', 'close'].map((k) => (
          <button key={k} type="button" aria-label={`文档${k}`} className="flex size-[17px] items-center justify-center rounded-[4px] border border-[#777] bg-[#f4f4f4]">
            <WindowGlyph kind={k} className="size-[11px]" />
          </button>
        ))}
      </div>
    </nav>
  )
}

const rowBase = 'flex items-center overflow-hidden border-t border-t-[#fafafa] bg-gradient-to-b from-[#e0e0e0] to-[#cfcfcf]'

function More() {
  return (
    <span className="flex h-full w-[14px] shrink-0 flex-col items-center justify-between pb-2">
      <svg viewBox="0 0 9 6" className="mt-1 h-[6px] w-[9px]" aria-hidden="true">
        <path d="M1 0L4 3L1 6M5 0L8 3L5 6" fill="none" stroke="#000" strokeWidth="1.5" />
      </svg>
      <Down />
    </span>
  )
}

function Toolbars() {
  return (
    <div>
      <div className={`${rowBase} h-[35px]`}>
        <Grip />
        <button type="button" className="flex w-[71px] shrink-0 items-center text-[15px]">
          <Icon name="nx" className="size-6" />
          <span className="ml-1 whitespace-nowrap">开始</span>
          <Down className="ml-1" />
        </button>
        <Tools items={standardBar} active="csys" />
      </div>
      <div className={`${rowBase} h-[34px]`}>
        <Grip />
        <Picker label="工作图层" options={['1']} className="ml-px h-[22px] w-[58px] shrink-0" text="text-base" />
        <span className="ml-[2px] flex items-center">
          <Tools items={['layers', '|', 'palette', 'showHide']} />
        </span>
        <span className="ml-5 h-full">
          <More />
        </span>
        <Tools items={[':', ...featureBar]} />
        <span className="ml-auto h-full">
          <More />
        </span>
      </div>
      <div className={`${rowBase} h-8 border-t-[#8f8f8f] pl-[5px]`}>
        <Picker label="类型过滤器" options={['没有选择过滤器']} className="h-6 w-[178px] shrink-0" text="text-base" />
        <Picker label="选择范围" options={['整个装配']} className="ml-2 mr-1 h-6 w-[188px] shrink-0" text="text-base" />
        <Tools items={snapBar} small active="snapAll" />
        <span className="ml-auto flex h-full w-[14px] items-end justify-center pb-1">
          <Down />
        </span>
      </div>
      <div className="flex h-6 items-stretch border-t border-t-white bg-[#dadada] pl-1">
        <p className="w-[640px] whitespace-nowrap border-r border-r-white text-[17px] font-bold leading-[22px]">
          为“接触/对齐”选择第一个对象或拖动几何体
        </p>
        <span className="ml-auto w-[21px] border-l border-l-white" />
        <span className="w-[35px] border-l border-l-white" />
        <button type="button" aria-label="全屏" className="flex w-[22px] items-center justify-center border-l border-l-white">
          <svg viewBox="0 0 14 14" className="size-[14px]">
            <path d="M0 4V0H4M10 0H14V4M14 10V14H10M4 14H0V10" fill="none" stroke="#333" strokeWidth="1.5" />
            <path d="M3 3H11V11H3Z" fill="#4c8ce0" stroke="#203c70" />
          </svg>
        </button>
      </div>
    </div>
  )
}

function Scene() {
  return (
    <svg viewBox="2 192 1320 505" preserveAspectRatio="xMinYMin slice" className="absolute inset-0 size-full" aria-hidden="true">
      <defs>
        <linearGradient id="sky" x1="0" y1="0" x2="0" y2="1">
          <stop offset="0" stopColor="#9abfde" />
          <stop offset="0.3" stopColor="#b4cde0" />
          <stop offset="0.52" stopColor="#cfdae4" />
          <stop offset="0.72" stopColor="#e4e5e7" />
          <stop offset="1" stopColor="#e6e6e6" />
        </linearGradient>
        <linearGradient id="post" x1="0" y1="0" x2="1" y2="0">
          <stop offset="0.3" stopColor="#7d5d00" />
          <stop offset="0.7" stopColor="#a07600" />
          <stop offset="1" stopColor="#a87e00" />
        </linearGradient>
      </defs>
      <path d="M0 192H1322V697H0Z" fill="url(#sky)" />
      <g stroke="#2e2a1c" strokeWidth="1.3" strokeLinejoin="round">
        <path d="M480 290L511 280L580 305V480H480Z" fill="#ffc600" />
        <path d="M560 508L743 573L575 658L480 628V500Z" fill="#ffc600" />
        <path d="M480 628L575 658V668L480 639Z" fill="#7a5a00" />
        <path d="M575 658L743 573V581L575 668Z" fill="#a87e00" />
        <path d="M526 304L692 363L690 556L524 498Z" fill="#715600" />
        <path d="M692 363L827 295L825 487L690 556Z" fill="#a87e00" />
        <path d="M661 235L827 295L692 363L526 305Z" fill="#ffc600" />
        <path d="M480 440H554V510H561V586Q558 604 520 604H480Z" fill="url(#post)" stroke="none" />
        <path d="M561 513V586Q558 604 515 604H480" fill="none" />
        <path d="M480 415L577 449V459L480 427Z" fill="#715600" />
        <path d="M577 449L640 418V426L577 459Z" fill="#a87e00" />
        <path d="M480 360L526 376L640 417L577 449L480 415Z" fill="#ffc600" stroke="none" />
        <path d="M480 415L577 449L640 418" fill="none" />
      </g>
      <g fill="none" stroke="#d81818" strokeWidth="1.5">
        <path d="M555 464L564 466M564 488V496M555 510L578 516V523H601L578 515" />
      </g>
      <g fill="none" stroke="#dcdcdc" strokeWidth="1.6">
        <path d="M526 434L525 498L570 475M525 498L556 509M582 516L602 525L580 517" />
        <path d="M526 409L522 434H531ZM588 466L566 474L573 480ZM572 470V478" />
      </g>
      <g fill="#e6e6e6" className="font-['Liberation_Sans',sans-serif] text-[11px]">
        <text x="525" y="404">Z</text>
        <text x="526" y="462">ZC</text>
        <text x="591" y="465">Y</text>
        <text x="550" y="486">YC</text>
        <text x="556" y="510">XC</text>
        <text x="606" y="528">X</text>
      </g>
      <Triad x={57} y={641} />
    </svg>
  )
}

function Triad({ x, y }) {
  return (
    <g transform={`translate(${x} ${y})`} strokeWidth="2" className="font-['Liberation_Mono',monospace] text-[10px] font-bold">
      <path d="M0 0V-27" stroke="#4434c0" />
      <path d="M0 0L18-8" stroke="#20b070" />
      <path d="M0 0L20 8" stroke="#f03020" />
      <circle r="3" fill="#909090" />
      <text x="-2" y="-29" fill="#4434c0" stroke="none">Z</text>
      <text x="21" y="-8" fill="#20b070" stroke="none">Y</text>
      <text x="26" y="13" fill="#f03020" stroke="none">X</text>
    </g>
  )
}

function PreviewWindow() {
  return (
    <section className="absolute bottom-[9px] right-2 w-[312px] overflow-hidden rounded-[6px] border border-[#333] bg-[#ebebeb]">
      <h2 className="h-6 border-b border-black bg-[linear-gradient(#6c6c6c,#444_38%,#1c1c1c_39%)] px-2 pt-1 text-[15px] leading-5 text-white">组件预览</h2>
      <div className="mx-[10px] mb-[5px] mt-[9px] border-2 border-[#777] border-b-white border-r-white p-px">
        <svg viewBox="1016 388 284 283" className="block w-full" aria-hidden="true">
          <path d="M1014 386H1300V671H1014Z" fill="url(#sky)" />
          <g stroke="#2e2a1c" strokeWidth="1.3" strokeLinejoin="round">
            <path d="M1171 391L1291 447L1145 491L1025 436Z" fill="#ffc400" />
            <path d="M1025 436L1145 491V666L1025 611Z" fill="#7a5a00" />
            <path d="M1145 491L1291 447V621L1145 666Z" fill="#a87c00" />
          </g>
          <path d="M1025 578V611L1053 602M1025 611L1047 622" fill="none" stroke="#e8e8e8" strokeWidth="1.5" />
          <path d="M1025 602V611" stroke="#2020c0" strokeWidth="2" strokeDasharray="1 1" />
          <g fill="#ececec" className="font-['Liberation_Sans',sans-serif] text-[11px]">
            <text x="1025" y="575">ZC</text>
            <text x="1057" y="603">YC</text>
            <text x="1051" y="624">XC</text>
          </g>
          <Triad x={1072} y={615} />
        </svg>
      </div>
      <div className="h-2 bg-[#1c1c1c]" />
    </section>
  )
}

function SectionHead({ title }) {
  return (
    <div className="flex h-[26px] border-b border-b-[#8a8a8a] bg-[linear-gradient(#fafafa,#f2f2f2_55%,#dcdcdc_60%,#e4e4e4)]">
      <h3 className="flex-1 pl-[6px] text-[17px] font-bold leading-6">{title}</h3>
      <button type="button" aria-label={`折叠 ${title}`} className="flex w-[26px] items-center justify-center border-l border-l-[#aaa]">
        <svg viewBox="0 0 12 10" className="h-[10px] w-3">
          <path d="M1 9L6 1L11 9" fill="none" stroke="#555" strokeWidth="2.2" />
        </svg>
      </button>
    </div>
  )
}

function Check({ label, initial = true }) {
  const [on, setOn] = useState(initial)
  return (
    <label className="flex h-7 items-center text-[15px] leading-4">
      <span className="relative mr-2 size-4">
        <input
          type="checkbox"
          checked={on}
          onChange={(e) => setOn(e.target.checked)}
          className="absolute inset-0 appearance-none rounded-[3px] border border-[#666] bg-gradient-to-b from-[#cfcfcf] to-[#f4f4f4] checked:border-[#28508c] checked:from-[#f0f8ff] checked:to-[#4cc4f0]"
        />
        {on && (
          <svg viewBox="0 0 16 16" className="pointer-events-none absolute inset-0">
            <path d="M3 7L7 11L13 4" fill="none" stroke="#12408c" strokeWidth="3" />
          </svg>
        )}
      </span>
      {label}
    </label>
  )
}

const orientations = [
  ['prefer', '首选接触'],
  ['touch', '接触'],
  ['align', '对齐'],
  ['axis', '自动判断中心/轴'],
  ['shortcut', '显示快捷键'],
]

const railTab = 'flex w-6 items-center justify-center border border-[#888]'
const lightTab = `${railTab} bg-gradient-to-b from-[#fafafa] to-[#dadada] text-[#555]`
const darkTab = `${railTab} bg-[linear-gradient(#5a5a5a,#3a3a3a_40%,#1b1b1b_41%)] text-white`

function RailGlyph({ d }) {
  return (
    <svg viewBox="0 0 12 12" className="size-3" fill="none" stroke="currentColor" strokeWidth="2.2" aria-hidden="true">
      <path d={d} />
    </svg>
  )
}

function ConstraintDialog() {
  const [current, setCurrent] = useState('自动判断中心/轴')
  const panel = 'border-x border-x-[#999] bg-[#d3d3d3] pl-[7px] pr-[9px]'
  return (
    <section className="absolute left-[99px] top-0 w-[408px]">
      <div className="flex h-[25px]">
        <button type="button" aria-label="左" className={lightTab}><RailGlyph d="M9 2L2 6L9 10" /></button>
        <button type="button" aria-label="菜单" className={darkTab}><RailGlyph d="M2 3L9 9M9 4V10H3" /></button>
        <h2 className="border border-[#888] bg-[linear-gradient(#5a5a5a,#3a3a3a_40%,#1b1b1b_41%)] px-1 text-[17px] font-bold leading-[22px] text-white">
          <span className="block w-[75px] whitespace-nowrap">装配约束</span>
        </h2>
        <button type="button" aria-label="重置" className={darkTab}><RailGlyph d="M6 1Q11 3 9 7Q6 11 2 8" /></button>
        <button type="button" aria-label="折叠" className={darkTab}><RailGlyph d="M1 5H11" /></button>
        <button type="button" aria-label="关闭对话框" className={darkTab}><RailGlyph d="M2 2L10 10M10 2L2 10" /></button>
        <button type="button" aria-label="右" className={lightTab}><RailGlyph d="M3 2L10 6L3 10" /></button>
      </div>
      <div className="border border-b-0 border-[#777] bg-[#ebebeb] pb-[11px] pl-[6px] pr-[6px] pt-[7px]">
        <div className="flex h-[432px]">
          <div className="min-w-0 flex-1 overflow-hidden">
            <SectionHead title="类型" />
            <div className={`${panel} pb-[10px] pt-[7px]`}>
              <Picker label="类型" options={['接触对齐']} icon="touchAlign" />
            </div>
            <SectionHead title="要约束的几何体" />
            <div className={`${panel} pb-[7px] pt-[7px]`}>
              <div className="relative flex items-center text-[15px]">
                <span className="flex-1">方位</span>
                <Picker label="方位" options={orientations.map((o) => o[1])} icon="prefer" className="w-[150px]" />
                <ul className="absolute right-[-1px] top-[26px] z-10 w-[152px] border border-[#666] bg-[#c8efcb]">
                  {orientations.map(([icon, name]) => (
                    <li key={name}>
                      <button
                        type="button"
                        onClick={() => setCurrent(name)}
                        className={`flex h-[22px] w-full items-center whitespace-nowrap pl-[2px] ${current === name ? 'bg-[#3196fb] text-white' : ''}`}
                      >
                        <Icon name={icon} className="mr-1 size-4" />
                        {name}
                      </button>
                    </li>
                  ))}
                </ul>
              </div>
              <button type="button" className="mt-[3px] flex h-[31px] w-full items-center rounded-[5px] bg-gradient-to-r from-[#e59f5c] to-[#d8c4b0] to-60% pl-[6px] text-[15px]">
                <span className="mr-1 text-lg font-bold leading-5 text-[#d02010]">*</span>
                选择两个对象 (0)
              </button>
              <p className="mt-px h-7 text-[15px] leading-7 text-[#9a9a9a]">返回上一个约束</p>
            </div>
            <SectionHead title="设置" />
            <div className={`${panel} pb-2 pt-[7px]`}>
              <div className="mb-[2px] flex items-center text-[15px]">
                <span className="flex-1">布置</span>
                <Picker label="布置" options={['使用组件属性']} className="w-[150px]" />
              </div>
              <Check label="动态定位" />
              <Check label="关联" />
              <Check label="移动曲线和管线布置对象" initial={false} />
              <Check label="动态更新管线布置实体" />
            </div>
            <SectionHead title="预览" />
            <div className={`${panel} pt-1`}>
              <Check label="预览窗口" />
            </div>
          </div>
          <div className="ml-[1px] flex w-[19px] flex-col items-center bg-[#f1f1f1] text-[#333]">
            <svg viewBox="0 0 8 5" className="my-[9px] h-[5px] w-2"><path d="M0 5L4 0L8 5Z" fill="currentColor" /></svg>
            <div className="flex w-full flex-1 items-center justify-center rounded-[2px] border border-[#888] bg-gradient-to-r from-[#fafafa] to-[#cfd0d6]">
              <span className="h-[10px] w-2 border-y border-[#666]">
                <span className="mt-[2px] block h-1 border-y border-[#666]" />
              </span>
            </div>
            <svg viewBox="0 0 8 5" className="mb-2 mt-[43px] h-[5px] w-2"><path d="M0 0H8L4 5Z" fill="currentColor" /></svg>
          </div>
        </div>
        <div className="mt-[3px] flex justify-end gap-[7px] border-t border-t-[#b0b0b0] pr-[10px] pt-[5px] text-[15px]">
          {['确定', '应用', '取消'].map((name) => (
            <button
              key={name}
              type="button"
              className={`h-[26px] w-[58px] rounded-[4px] border-2 leading-5 ${
                name === '应用'
                  ? 'border-[#55744e] bg-[linear-gradient(#c4f0b0,#a8e890_50%,#78d858_51%,#a4f090)]'
                  : 'border-[#777] bg-[linear-gradient(#fafafa,#ececec_50%,#d2d2d2_51%,#e6e6e6)]'
              }`}
            >
              {name}
            </button>
          ))}
        </div>
      </div>
      <div className="h-2 rounded-b-[6px] bg-[#1b1b1b]" />
    </section>
  )
}

const resourceTabs = [['navAsm', 'navCon', 'navPart'], ['navWeb'], ['clock', 'roles', 'spectrum', 'process', 'people']]
const railArrows = ['M3 3H11M7 5L11 10H3Z', 'M7 5L11 9H3Z', 'M3 5H11L7 9Z', 'M3 4H11L7 9ZM3 11H11']

function ResourceBar() {
  return (
    <aside className="flex w-[33px] flex-col overflow-hidden bg-[#a9a9a9] pt-[17px]">
      <div className="flex flex-col gap-[13px]">
        {resourceTabs.map((group, i) => (
          <div key={i} className="flex flex-col gap-[2px]">
            {group.map((name) => (
              <button key={name} type="button" aria-label={name} className="flex h-10 w-[26px] items-center justify-center rounded-r-[4px] border border-[#777] bg-[#e2e2e2]">
                <Icon name={name} className="size-[22px]" />
              </button>
            ))}
          </div>
        ))}
      </div>
      <div className="mt-[2px] h-3 w-[26px] rounded-tr-[4px] border border-b-2 border-[#777] border-b-[#1c3c88] bg-[#e2e2e2]" />
      <div className="mt-[6px] flex flex-col gap-px pl-[6px]">
        {railArrows.map((d, i) => (
          <button key={i} type="button" aria-label={`滚动 ${i + 1}`} className={`size-[15px] border border-[#888] bg-[#f1f1f1] ${i < 2 ? 'text-[#aaa]' : 'text-[#333]'}`}>
            <svg viewBox="0 0 14 14" className="size-[13px]"><path d={d} fill="currentColor" stroke="currentColor" /></svg>
          </button>
        ))}
      </div>
    </aside>
  )
}

function StartOrb() {
  return (
    <button type="button" aria-label="开始菜单" className="relative -mt-[7px] ml-3 h-[50px] w-[50px] shrink-0 self-start">
      <svg viewBox="0 0 50 50">
        <defs>
          <radialGradient id="orb" cx="0.5" cy="0.9" r="0.8">
            <stop offset="0" stopColor="#48d0f0" />
            <stop offset="0.5" stopColor="#1c6494" />
            <stop offset="1" stopColor="#34506a" />
          </radialGradient>
        </defs>
        <circle cx="25" cy="25" r="24" fill="url(#orb)" stroke="#8aa8bc" />
        <path d="M4 20Q8 3 25 3Q42 3 46 20Q25 28 4 20Z" fill="#b8ccd8" opacity="0.6" />
        <path d="M15 11Q20 7 25 11L22 22Q17 18 12 21Z" fill="#f06428" />
        <path d="M27 12Q32 15 39 12L36 23Q29 26 24 23Z" fill="#88c838" />
        <path d="M11 24Q16 21 21 25L18 36Q13 32 8 35Z" fill="#3c98e8" />
        <path d="M23 26Q29 29 35 26L32 37Q25 40 20 37Z" fill="#ffd028" />
      </svg>
    </button>
  )
}

const tasks = [
  ['maxthon', 'UG6.0装配约束问题...'],
  ['nx', 'NX 6 - 建模 - [mod...'],
  ['paint', '无标题 - 画图'],
]

function TaskBar() {
  return (
    <footer className="flex h-9 items-center border-t border-t-[#555] bg-[linear-gradient(#757575,#484848_38%,#050505_42%,#000)] text-white">
      <StartOrb />
      <div className="ml-[14px] flex gap-[5px]">
        {['desktop', 'switcher', 'maxthon', 'sw', 'nx'].map((name) => (
          <button key={name} type="button" aria-label={name} className="flex w-6 justify-center">
            <Icon name={name} className={name === 'maxthon' || name === 'sw' ? 'size-5' : 'size-[22px]'} />
          </button>
        ))}
      </div>
      <span className="ml-[28px] w-[21px] self-start text-base leading-4">»</span>
      <div className="flex gap-[3px]">
        {tasks.map(([icon, name]) => (
          <button
            key={name}
            type="button"
            className={`flex h-[33px] w-[197px] items-center whitespace-nowrap rounded-[3px] border border-[#686868] pl-2 text-[15px] ${
              icon === 'nx' ? 'bg-[linear-gradient(#3c3c3c,#202020_40%,#000_42%)]' : 'bg-[linear-gradient(#909090,#5a5a5a_38%,#161616_42%,#101010)]'
            }`}
          >
            <Icon name={icon} className="mr-[5px] size-[21px]" />
            {name}
          </button>
        ))}
      </div>
      <div className="ml-auto flex items-center pr-4">
        <Icon name="keyboard" className="size-[22px]" />
        <span className="ml-[5px] flex size-5 items-center justify-center rounded-full border-2 border-[#c8ccd8] bg-[#1824b8] text-sm font-bold">?</span>
        <span className="ml-[9px] flex flex-col items-center gap-2">
          <WindowGlyph kind="restore" className="size-[9px]" />
          <Down />
        </span>
        <svg viewBox="0 0 10 12" className="ml-[13px] h-3 w-[10px]"><path d="M9 1L2 6L9 11" fill="none" stroke="#fff" strokeWidth="2.5" /></svg>
        <Icon name="power" className="ml-[25px] size-5" />
        <Icon name="network" className="ml-[3px] size-5" />
        <Icon name="speaker" className="ml-1 size-5" />
        <time className="ml-3 text-base">18:57</time>
      </div>
    </footer>
  )
}

function App() {
  return (
    <div className={`flex min-h-screen flex-col overflow-hidden bg-[#dadada] text-black ${uiFont}`}>
      <TitleBar />
      <MenuBar />
      <Toolbars />
      <main className="relative flex flex-1 flex-col">
        <div className="h-[14px] border-b border-b-[#777] bg-[#b9b9b9] pt-[6px]">
          <div className="mx-1 h-[3px] border-t border-t-[#8a8a8a] bg-[#ededed]" />
        </div>
        <div className="flex flex-1 border-b border-b-white">
          <div className="relative flex-1 overflow-hidden border-l-2 border-l-[#9a9a9a]">
            <Scene />
            <PreviewWindow />
          </div>
          <div className="w-[11px] bg-[#ededed]" />
          <ResourceBar />
        </div>
        <ConstraintDialog />
      </main>
      <div className={`${rowBase} h-[35px]`}>
        <Grip className="ml-1" />
        <Tools items={assemblyBar} />
      </div>
      <TaskBar />
    </div>
  )
}

export default App
